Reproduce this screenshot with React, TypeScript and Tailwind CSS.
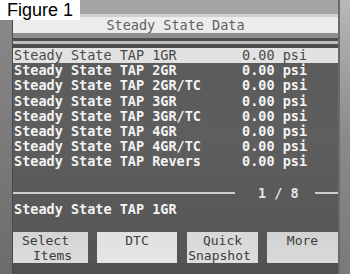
const rows: [string, string][] = [
  ["Steady State TAP 1GR", "0.00 psi"],
  ["Steady State TAP 2GR", "0.00 psi"],
  ["Steady State TAP 2GR/TC", "0.00 psi"],
  ["Steady State TAP 3GR", "0.00 psi"],
  ["Steady State TAP 3GR/TC", "0.00 psi"],
  ["Steady State TAP 4GR", "0.00 psi"],
  ["Steady State TAP 4GR/TC", "0.00 psi"],
  ["Steady State TAP Revers", "0.00 psi"],
];

export default function App() {
  return (
    <div className="relative w-[350px] h-[274px] overflow-hidden flex bg-[#6e6e6e] font-['DejaVu_Sans_Mono',monospace]">
      {/* left bezel */}
      <div className="w-[13px] bg-gradient-to-b from-[#8a8a8a] to-[#6c6c6c] border-r border-[#4a4a4a]" />

      {/* screen */}
      <div className="w-[325px] flex flex-col bg-gradient-to-b from-[#595959] via-[#5e5e5e] to-[#545454]">
        <div className="h-[17px] bg-[#a4a4a4] border-b-[3px] border-[#cfcfcf]" />
        <div className="h-[16px] bg-[#ececec] text-center text-[13.5px] leading-[16px] text-[#5f5f5f]">
          Steady State Data
        </div>
        <div className="h-[5px] bg-[#8e8e8e]" />
        <div className="h-[3px] bg-[#4c4c4c]" />
        <div className="h-[3px] bg-[#bdbdbd]" />
        <div className="h-[4px] bg-[#4c4c4c]" />

        {rows.map(([label, value], i) => (
          <div
            key={label}
            className={`flex h-[15.2px] items-center text-[13.5px] leading-[15px] font-bold ${
              i === 0 ? "bg-[#e2e2e2] text-[#4a4a4a] font-normal" : "text-[#f3f3f3]"
            }`}
          >
            <span className="w-[229px] pl-[1px] whitespace-pre">{label}</span>
            <span className="whitespace-pre">{value}</span>
          </div>
        ))}

        {/* page indicator */}
        <div className="mt-[16px] h-[14px] flex items-center">
          <div className="w-[222px] h-[2px] bg-[#cdcdcd]" />
          <span className="ml-[23px] text-[13.5px] leading-[14px] font-bold text-[#e4e4e4] whitespace-pre">1 / 8</span>
          <div className="ml-[16px] flex-1 h-[2px] bg-[#cdcdcd]" />
        </div>

        <div className="mt-[2px] h-[15px] pl-[1px] text-[13.5px] leading-[15px] font-bold text-[#f3f3f3]">
          Steady State TAP 1GR
        </div>

        {/* soft keys */}
        <div className="mt-[15px] h-[31px] flex text-[13px] leading-[15px] text-[#3c3c3c]">
          <div className="w-[75px] bg-gradient-to-b from-[#d4d4d4] to-[#dcdcdc] pt-[1px] flex flex-col">
            <span className="pl-[9px]">Select</span>
            <span className="pl-[20px]">Items</span>
          </div>
          <div className="ml-[9px] w-[80px] bg-gradient-to-b from-[#e0e0e0] to-[#e6e6e6] pt-[1px] text-center">DTC</div>
          <div className="ml-[10px] w-[71px] bg-gradient-to-b from-[#d8d8d8] to-[#dedede] pt-[1px] flex flex-col items-center">
            <span>Quick</span>
            <span className="-ml-[6px] whitespace-nowrap">Snapshot</span>
          </div>
          <div className="ml-[9px] w-[71px] bg-gradient-to-b from-[#d2d2d2] to-[#dadada] pt-[1px] text-center">More</div>
        </div>
        <div className="flex-1 bg-[#505050]" />
      </div>

      {/* right bezel */}
      <div className="flex-1 bg-gradient-to-b from-[#b8b8b8] via-[#8a8a8a] to-[#7a7a7a] border-l-2 border-[#6a6a6a]" />

      {/* caption */}
      <div className="absolute top-0 left-0 w-[80px] h-[20px] bg-white pl-[7px] font-['Liberation_Sans',Arial,sans-serif] text-[18px] leading-[20px] text-black">
        Figure 1
      </div>
    </div>
  );
}
